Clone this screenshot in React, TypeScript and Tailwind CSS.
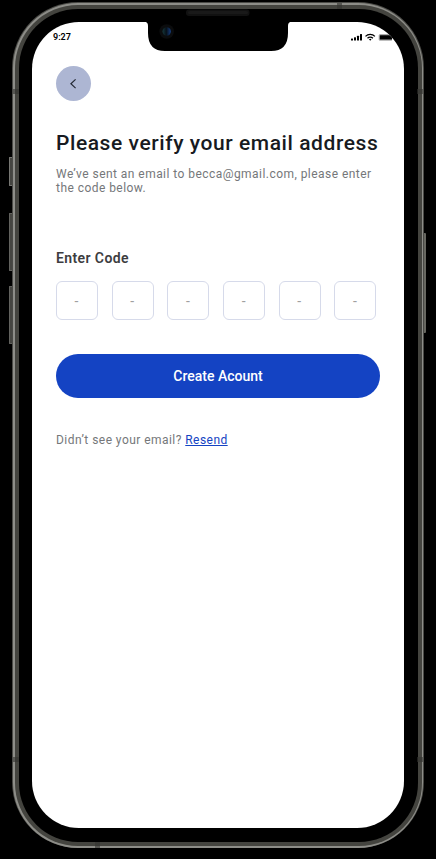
const digits = [0, 1, 2, 3, 4, 5];

function StatusBar() {
  return (
    <div className="flex h-[27px] items-center justify-between pl-[21px] pr-[12px] pt-[3px]">
      <span className="text-[9px] font-semibold leading-none text-black">9:27</span>
      <svg width="41" height="9" viewBox="0 0 41 9" fill="#000">
        <rect x="0" y="5.5" width="2" height="2" rx=".5" />
        <rect x="3" y="4.3" width="2" height="3.2" rx=".5" />
        <rect x="6" y="2.8" width="2" height="4.7" rx=".5" />
        <rect x="9" y="1" width="2" height="6.5" rx=".5" />
        <g fill="none" stroke="#000" strokeWidth="1.3">
          <path d="M14.5 3.4a6.6 6.6 0 0 1 9.4 0" />
          <path d="M16.5 5.2a3.8 3.8 0 0 1 5.4 0" />
        </g>
        <path d="M17.9 6.3a2 2 0 0 1 2.6 0L19.2 7.8z" />
        <rect x="27.7" y="1.1" width="14" height="6.6" rx="1.5" fill="#aaa" />
        <rect x="28.8" y="2.2" width="13" height="4.4" rx=".5" />
      </svg>
    </div>
  );
}

function Notch() {
  return (
    <svg className="absolute inset-x-0 -top-3.5 mx-auto" width="146" height="44" viewBox="0 0 146 44">
      <defs>
        <linearGradient id="lens" x1="0" x2="1">
          <stop offset="0" stopColor="#16383c" />
          <stop offset=".45" stopColor="#071018" />
          <stop offset="1" stopColor="#153e83" />
        </linearGradient>
      </defs>
      <path d="M0 12V13.7Q3 14 3 18V25Q3 43 20 43H126Q143 43 143 25V18Q143 14 146 13.7V12Z" fill="#000" />
      <rect x="41" y="1.5" width="63.5" height="6.5" rx="3" fill="#111" />
      <rect x="43" y="3" width="60" height="3" rx="1.5" fill="#191919" />
      <circle cx="21.7" cy="23.5" r="7.3" fill="#0b0c0d" />
      <circle cx="21.7" cy="23.5" r="4.2" fill="url(#lens)" />
    </svg>
  );
}

function Phone() {
  return (
    <div className="grid h-[846px] w-[412px] rounded-[66px] bg-[#4a4a46] p-px">
      <div className="col-start-1 row-start-1 rounded-[65px] bg-[#8d8d88] p-[1.5px]">
        <div className="h-full rounded-[63px] bg-[#44443f] p-[4px]">
          <div className="h-full rounded-[59px] bg-black px-[13.5px] pb-[14px] pt-[13.5px]">
            <div className="relative h-[806px] w-[372px]">
              <div className="h-full overflow-hidden rounded-[47px] bg-white">
                <StatusBar />
                <main className="flex flex-col items-start px-[24px] pt-[17px]">
                  <button aria-label="Back" className="flex size-[35px] items-center justify-center rounded-full bg-[#adb6d3]">
                    <svg width="10" height="10" viewBox="0 0 10 10" fill="none" stroke="#252a36" strokeWidth="1.2">
                      <path d="M6.6 .4L1.9 4.7l4.7 4.4" />
                    </svg>
                  </button>
                  <h1 className="mt-[28px] whitespace-nowrap text-[21px] font-medium leading-[28px] tracking-[0.57px] text-[#171a21]">
                    Please verify your email address
                  </h1>
                  <p className="mt-[10px] whitespace-nowrap text-[12px] leading-[14px] tracking-[0.45px] text-[#75777a]">
                    We’ve sent an email to becca@gmail.com, please enter
                    <br />
                    the code below.
                  </p>
                  <h2 className="mt-[55px] text-[14px] font-semibold leading-[16px] tracking-[0.4px] text-[#3d3d3f]">Enter Code</h2>
                  <div className="mt-[15px] flex gap-[13.7px]">
                    {digits.map((d) => (
                      <div key={d} className="flex h-[39px] w-[42px] shrink-0 items-center justify-center rounded-[6px] border border-[#d6daea] pr-px text-[14px] leading-none text-[#a0a0a0]">
                        -
                      </div>
                    ))}
                  </div>
                  <button className="mt-[34px] flex h-[44px] w-full items-center justify-center rounded-full bg-[#1443c3] text-[14px] font-medium text-white">
                    Create Acount
                  </button>
                  <p className="mt-[35px] whitespace-nowrap text-[12px] leading-[14px] tracking-[0.45px] text-[#75777a]">
                    Didn’t see your email? <a className="text-[#1443c3] underline">Resend</a>
                  </p>
                </main>
              </div>
              <Notch />
            </div>
          </div>
        </div>
      </div>
      <div className="pointer-events-none col-start-1 row-start-1 flex flex-col justify-between">
        <div className="flex h-[6px] justify-end pr-[81px]">
          <div className="w-[5px] bg-[#333330]/60" />
        </div>
        <div className="flex h-[673px] flex-col justify-between">
          <div className="flex h-[5px] justify-between">
            <div className="w-[6px] bg-[#333330]/60" />
            <div className="w-[6px] bg-[#333330]/60" />
          </div>
          <div className="flex h-[5px] justify-between">
            <div className="w-[6px] bg-[#333330]/60" />
            <div className="w-[6px] bg-[#333330]/60" />
          </div>
        </div>
        <div className="flex h-[6px] pl-[82px]">
          <div className="w-[5px] bg-[#333330]/60" />
        </div>
      </div>
    </div>
  );
}

export default function App() {
  return (
    <div className="flex h-[859px] w-[436px] overflow-hidden bg-black pl-[9px] pt-[2px] font-['Roboto',sans-serif]">
      <div className="flex w-[3px] shrink-0 flex-col pt-[155px]">
        <div className="h-[29px] rounded-l-[1px] border border-r-0 border-[#777773] bg-[#454541]" />
        <div className="mt-[27px] h-[58px] rounded-l-[1px] border border-r-0 border-[#62625e] bg-[#454541]" />
        <div className="mt-[15px] h-[58px] rounded-l-[1px] border border-r-0 border-[#62625e] bg-[#454541]" />
      </div>
      <Phone />
      <div className="w-[2px] pt-[231px]">
        <div className="h-[100px] rounded-r-[1px] bg-[#676760]" />
      </div>
    </div>
  );
}
